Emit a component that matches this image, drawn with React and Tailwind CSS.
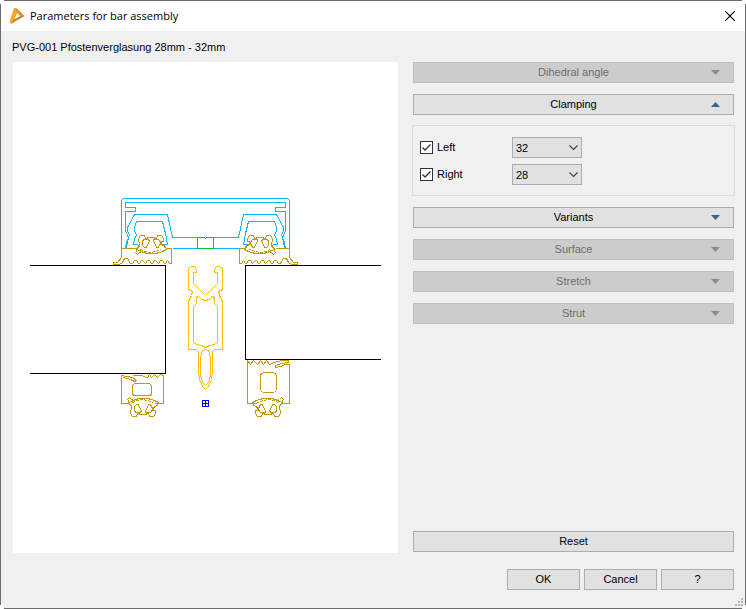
import React, { useState } from 'react';

const Gasket = () => (
    <g stroke="#c89600">
        <path d="M138.5 241.5 V238.5 L140.5 235.5 H144.5 L145.5 238.5 L149.5 237.5 H152.5 L156.5 238.5 L157.5 235.5 H161.5 L163.5 238.5 V241.5 L160.5 241.5 L162.5 245.5 L165.5 246.5 L166.5 249.5 L162.5 251.5 L159.5 252.5 L155.5 253.5 H147.5 L143.5 252.5 L139.5 250.5 L136.5 249.5 L137.5 247.5 L139.5 246.5 V242.5 Z" />
        <path d="M143.5 239.5 H148.5 L149.5 241.5 L147.5 244.5 L146.5 247.5 H144.5 L142.5 245.5 L142.5 241.5 Z" />
        <path d="M153.5 239.5 H158.5 L160.5 242.5 L159.5 246.5 L157.5 247.5 H156.5 L155.5 244.5 L153.5 241.5 Z" />
        <path d="M137.5 249.5 L135.5 252.5 L137.5 254.5 L139.5 252.5 L141.5 251.5" />
        <path d="M140.5 249.5 L145.5 251.5 L150.5 252.5 L155.5 251.5 L161.5 249.5" strokeDasharray="3 1" />
    </g>
);

// Left half of the pressure plate, the right half is mirrored
const CoverHalf = () => (
    <g>
        <g stroke="#00b8ff">
            <path d="M205.5 198.5 H123.5 L121.5 200.5 V248.5" />
            <path d="M205.5 202.5 H125.5 V207.5 H135.5 V211.5 H125.5 V231.5 L127.5 234.5 L128.5 238.5 L126.5 242.5 L125.5 248.5" />
            <path d="M197.5 237.5 H172.5 L167.5 214.5 H134.5 L127.5 227.5 V231.5 L129.5 234.5 L127.5 241.5 L126.5 248.5" />
            <path d="M197.5 248.5 H172.5" />
            <path d="M139.5 247.5 L137.5 244.5 H133.5 L134.5 239.5 L136.5 234.5 L134.5 231.5 V227.5 L136.5 221.5 H162.5 L165.5 233.5 L167.5 244.5 H163.5 L165.5 248.5" />
        </g>
        <path
            stroke="#c89600"
            d="M135.5 248.5 H121.5 V257.5 L117.5 262.5 H113.5 V264.5 H119.5 L122.5 262.5 L124.5 258.5 H127.5 L130.5 263.5 H132.5 L134.5 260.5 H136.5 L138.5 263.5 H139.5 L141.5 260.5 H142.5 L145.5 263.5 L147.5 260.5 H149.5 L151.5 263.5 H152.5 L154.5 260.5 H155.5 L158.5 263.5 L160.5 260.5 H162.5 L164.5 263.5 H165.5 L167.5 260.5 L169.5 263.5 H171.5 V248.5 H165.5"
        />
        <Gasket />
    </g>
);

const PostHalf = () => (
    <g stroke="#ffbf00">
        <path d="M205.5 295.5 L193.5 283.5 V272.5 H196.5 V269.5 L194.5 266.5 H191.5 L188.5 268.5 V289.5 L192.5 291.5 L191.5 295.5 L188.5 301.5 V349.5 H196.5 L198.5 351.5 V370.5 L199.5 379.5 L202.5 386.5 L205.5 389.5" />
        <path d="M205.5 300.5 L201.5 299.5 L198.5 296.5 L196.5 297.5 V303.5 L193.5 306.5 V342.5 L196.5 344.5 L201.5 345.5 L205.5 347.5" />
        <path d="M205.5 349.5 L202.5 350.5 L200.5 357.5 V375.5 L202.5 382.5 L205.5 385.5" />
    </g>
);

const SectionDrawing = () => (
    <svg
        viewBox="13 62 385 491"
        className="block h-0 min-h-full w-full"
        fill="none"
        strokeWidth="1"
        shapeRendering="crispEdges"
        role="img"
        aria-label="PVG-001"
    >
        <CoverHalf />
        <g transform="translate(411 0) scale(-1 1)">
            <CoverHalf />
        </g>
        <path stroke="#00c030" d="M197.5 237.5 H204.5 L205.5 238.5 L206.5 237.5 H213.5 V248.5 H197.5 Z" />

        <PostHalf />
        <g transform="translate(411 0) scale(-1 1)">
            <PostHalf />
        </g>

        {/* inner gaskets */}
        <g stroke="#c89600">
            <path d="M129.5 403.5 H121.5 V375.5 L126.5 376.5 L132.5 377.5 L136.5 380.5 L134.5 381.5 L130.5 379.5 L123.5 377.5" />
            <path d="M132.5 375.5 H142.5 L145.5 377.5 H147.5 L149.5 374.5 L151.5 377.5 L154.5 374.5 L157.5 377.5 L160.5 374.5 L163.5 375.5 V403.5 H154.5" />
            <rect x="132.5" y="383.5" width="19" height="12" rx="3" />
            <path d="M256.5 403.5 H247.5 V360.5 L250.5 364.5 L253.5 360.5 L257.5 364.5 L260.5 360.5 L263.5 364.5 L266.5 360.5 L269.5 364.5 L274.5 362.5 L281.5 360.5 H288.5 V362.5 L281.5 363.5 L275.5 365.5 L275.5 367.5 L281.5 366.5 L284.5 364.5 H289.5 V403.5 H281.5" />
            <rect x="260.5" y="372.5" width="16" height="20" rx="4" />
        </g>
        <g transform="translate(-8 652) scale(1 -1)">
            <Gasket />
        </g>
        <g transform="translate(419 652) scale(-1 -1)">
            <Gasket />
        </g>

        {/* glass panes */}
        <g stroke="#000">
            <path d="M30 265.5 H165.5 V373.5 H30" />
            <path d="M381 265.5 H245.5 V359.5 H381" />
        </g>

        <path stroke="#0000ff" d="M202.5 400.5 H208.5 V406.5 H202.5 Z M205.5 400.5 V406.5 M202.5 403.5 H208.5" />
    </svg>
);

const SectionButton = ({ label, disabled, open, onClick }) => (
    <button
        type="button"
        disabled={disabled}
        onClick={onClick}
        aria-expanded={!!open}
        className="flex h-[21px] w-full shrink-0 items-center border border-[#adadad] bg-[#e1e1e1] px-[13px] disabled:border-[#bfbfbf] disabled:bg-[#cccccc] disabled:text-[#6d6d6d]"
    >
        <span className="flex-1" />
        <span className="pb-[2px]">{label}</span>
        <span className="flex flex-1 justify-end">
            <svg width="9" height="5" viewBox="0 0 9 5" fill={disabled ? '#8c8c8c' : '#2f6699'}>
                <path d={open ? 'M0 5 L4.5 0 L9 5 Z' : 'M0 0 H9 L4.5 5 Z'} />
            </svg>
        </span>
    </button>
);

const ClampRow = ({ id, label, value }) => {
    const [checked, setChecked] = useState(true);

    return (
        <div className="flex h-[21px] items-center">
            <div className="flex w-[92px] items-center gap-1">
                <span className="relative block size-[13px]">
                    <input
                        id={id}
                        type="checkbox"
                        checked={checked}
                        onChange={() => setChecked(!checked)}
                        className="block size-[13px] appearance-none border border-[#333333] bg-white"
                    />
                    {checked && (
                        <svg className="pointer-events-none absolute inset-0" width="13" height="13" viewBox="0 0 13 13" fill="none" stroke="#333" strokeWidth="1.3">
                            <path d="M2.5 6.5 L5 9 L10.5 3.5" />
                        </svg>
                    )}
                </span>
                <label htmlFor={id} className="pb-[2px]">{label}</label>
            </div>
            <div className="relative">
                <select
                    aria-label={label}
                    defaultValue={value}
                    className="block h-[21px] w-[70px] appearance-none border border-[#adadad] bg-[#e1e1e1] pl-[3px]"
                >
                    <option>28</option>
                    <option>32</option>
                </select>
                <svg className="pointer-events-none absolute top-2 right-1" width="9" height="6" viewBox="0 0 9 6" fill="none" stroke="#444" strokeWidth="1.2">
                    <path d="M0.5 0.5 L4.5 4.5 L8.5 0.5" />
                </svg>
            </div>
        </div>
    );
};

const DialogButton = ({ children }) => (
    <button type="button" className="h-[21px] w-[73px] border border-[#adadad] bg-[#e1e1e1] pb-[2px]">
        {children}
    </button>
);

const App = () => {
    const [openSection, setOpenSection] = useState('clamping');
    const toggle = (name) => setOpenSection(openSection === name ? '' : name);

    return (
        <div className="relative flex min-h-screen flex-col border border-[#6d6d6d] bg-[#f0f0f0] font-['Liberation_Sans',Arial,sans-serif] text-[11px] leading-4 text-black">
            {/* Window corners */}
            <span className="absolute -top-px -left-px size-1 bg-white" />
            <span className="absolute -top-px -right-px size-1 bg-white" />
            <span className="absolute -bottom-px -left-px size-1 rounded-tr-sm bg-white" />
            <span className="absolute -right-px -bottom-px size-1 rounded-tl-sm bg-white" />

            {/* Title bar */}
            <header className="flex h-[30px] items-center bg-white pr-[10px] pl-2">
                <svg width="16" height="16" viewBox="0 0 16 16">
                    <path d="M5 0 L8.5 1.5 L8 5 L5.5 11.5 L5 14 L2 16 L0.5 14 Z" fill="#f5a623" />
                    <path d="M5 0 L8 0.5 L15.5 8 L12 9 L7.5 4.5 Z" fill="#d8982c" />
                    <path d="M15.5 8 L2.5 15.5 L5 11.5 L11.5 8 Z" fill="#b9862c" />
                </svg>
                <h1 className="ml-[5px] flex-1 font-['Open_Sans',sans-serif] text-[11px]">Parameters for bar assembly</h1>
                <button type="button" aria-label="Close">
                    <svg width="10" height="10" viewBox="0 0 10 10" stroke="#000" strokeWidth="1.2">
                        <path d="M0 0 L10 10 M10 0 L0 10" />
                    </svg>
                </button>
            </header>

            <p className="flex h-[31px] items-center pl-[11px]">PVG-001 Pfostenverglasung 28mm - 32mm</p>

            <main className="grid flex-1 grid-cols-[385fr_321fr] gap-[15px] pr-[11px] pl-3">
                <div className="bg-white">
                    <SectionDrawing />
                </div>

                <div className="flex flex-col gap-[11px] pb-px">
                    <SectionButton label="Dihedral angle" disabled />
                    <SectionButton label="Clamping" open={openSection === 'clamping'} onClick={() => toggle('clamping')} />
                    {openSection === 'clamping' && (
                        <div className="-mx-px -mt-px flex flex-col gap-[6px] border border-[#dcdcdc] px-[7px] pt-[11px] pb-[10px]">
                            <ClampRow id="clamp-left" label="Left" value="32" />
                            <ClampRow id="clamp-right" label="Right" value="28" />
                        </div>
                    )}
                    <SectionButton label="Variants" open={openSection === 'variants'} onClick={() => toggle('variants')} />
                    <SectionButton label="Surface" disabled />
                    <SectionButton label="Stretch" disabled />
                    <SectionButton label="Strut" disabled />
                    <button type="button" className="mt-auto h-[21px] w-full border border-[#adadad] bg-[#e1e1e1] pb-[2px]">
                        Reset
                    </button>
                </div>
            </main>

            <footer className="flex justify-end gap-1 pt-4 pr-[11px] pb-[18px]">
                <DialogButton>OK</DialogButton>
                <DialogButton>Cancel</DialogButton>
                <DialogButton>?</DialogButton>
            </footer>

            {/* Resize grip */}
            <svg className="absolute right-[2px] bottom-[2px]" width="8" height="8" viewBox="0 0 8 8" fill="#b8b8b8">
                <path d="M6 0h2v2h-2z M3 3h2v2h-2z M6 3h2v2h-2z M0 6h2v2h-2z M3 6h2v2h-2z M6 6h2v2h-2z" />
            </svg>
        </div>
    );
};

export default App;
